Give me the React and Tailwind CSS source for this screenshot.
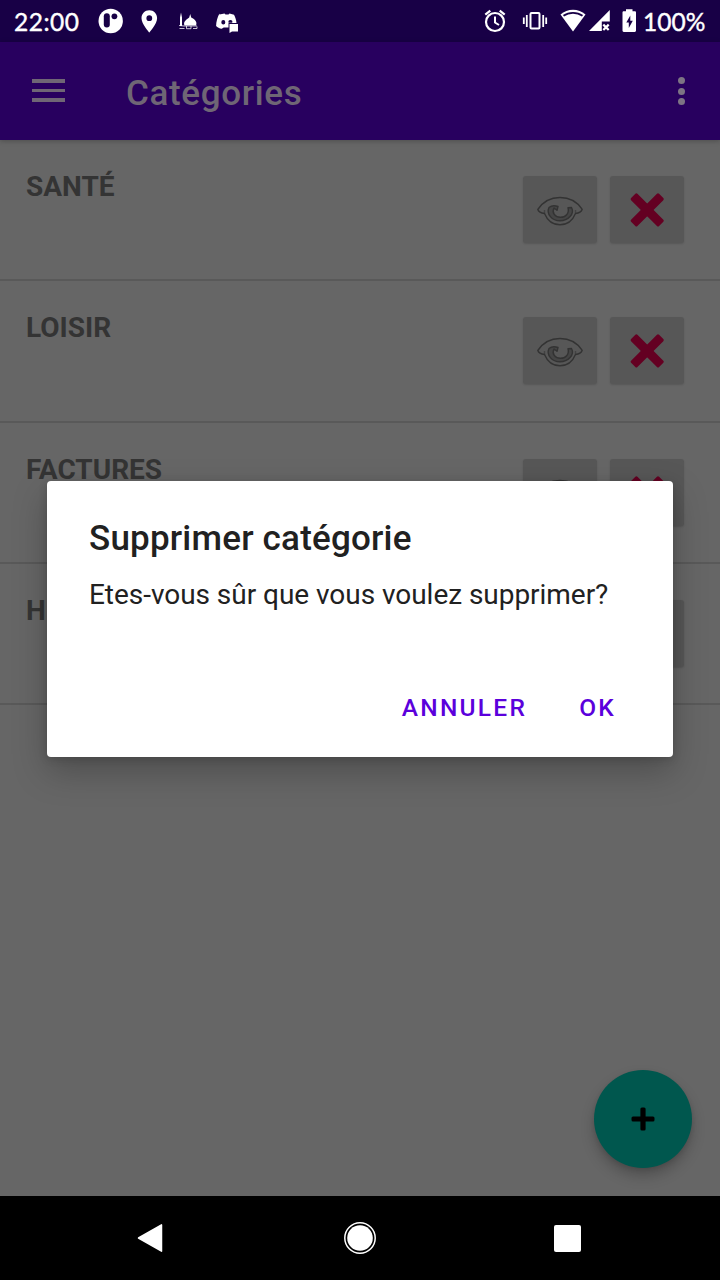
import React from "react";

const categories = ["SANTÉ", "LOISIR", "FACTURES", "H"];

function StatusBar() {
  return (
    <div className="flex h-[42px] shrink-0 items-center bg-[#180046] text-white">
      <span className="ml-[14px] w-[65px] pt-[2px] whitespace-nowrap font-[Lato,sans-serif] text-[24.500px] leading-[42px] tracking-[0.500px] [-webkit-text-stroke:0.4px_white]">22:00</span>
      <svg className="ml-[16px] h-[42px] w-[150px]" viewBox="95 0 150 42" fill="#fff">
        <circle cx="110.700" cy="21" r="12.200" />
        <rect x="103.800" y="13.200" width="6" height="14.400" rx="3" fill="#180046" />
        <circle cx="114.400" cy="16.300" r="2.900" fill="#180046" />
        <path fillRule="evenodd" d="M149.300 10.300c-4.400 0-7.800 3.500-7.800 7.900 0 5.700 7.800 14.300 7.800 14.300s7.800-8.600 7.800-14.300c0-4.400-3.400-7.900-7.800-7.900zm0 5a2.900 2.900 0 110 5.800 2.900 2.900 0 010-5.800z" />
        <path d="M180 26V17.500L181 12.500l1 5V26zM184.500 25.500c-1.500-3.500 1.200-5.500 4.700-8l1-3.500 1 3.500c4 2 6.300 4.500 4.800 8z" />
        <path d="M179 25.500l5 .5h13M179.500 28.500h5M186.500 26v2.700h4.500v-2.700M193 28.500h4v-2" stroke="#fff" strokeOpacity=".75" strokeWidth="1" fill="none" />
        <path fillRule="evenodd" d="M219.500 14.500l5-1 1 1h3l1-1 4.500 1.300c1.200 2 2.200 5 2.500 8.200h-8v4.500h-4.800l-2 1.200c-2.300-.2-4.300-1.300-5.600-2.700 0-4.500 1.400-9 3.400-12.500zm3.800 5.600a2 2.200 0 100 4.400 2 2.200 0 000-4.400zm7.100 0a2 2 0 00-1.800 2.600h3.600a2 2 0 00-1.800-2.600z" />
        <path d="M229.500 24h8.500v7.500h-6l-2.500 1.500z" />
      </svg>
      <svg className="ml-auto h-[42px] w-[164px]" viewBox="478 0 164 42" fill="none" stroke="#fff">
        <circle cx="495" cy="22" r="9" strokeWidth="2.200" />
        <path d="M495 16.500v6l4 2.500" strokeWidth="2" />
        <path d="M485.300 14.700l5-4M504.700 14.700l-5-4" strokeWidth="2.200" />
        <rect x="530.500" y="13" width="9" height="15.500" rx="1" strokeWidth="2" />
        <path d="M526.800 15v12M543.200 15v12M523.800 17.500v6.500M546.200 17.500v6.500" strokeWidth="1.800" />
        <path d="M560.500 14.500c7-6.300 18-6.300 25 0L573 31.500z" fill="#fff" stroke="none" />
        <path d="M563.500 15.800c5.500-4 13.500-4 19 0" stroke="#180046" strokeWidth="1.800" />
        <path d="M609.800 10v11.500h-8v9.500h-12.800z" fill="#fff" stroke="none" />
        <path d="M603.300 24.600l5.400 5.400M608.700 24.600l-5.400 5.400" strokeWidth="2.200" />
        <path d="M626 11.300v-2h6.500v2h2.200c.8 0 1.300.5 1.300 1.300v18c0 .8-.5 1.300-1.300 1.300h-10.900c-.8 0-1.300-.5-1.300-1.300v-18c0-.8.5-1.300 1.300-1.300z" fill="#fff" stroke="none" />
        <path d="M630.300 15.500l-4 7h2.500v5.500l4-7.200h-2.500z" fill="#180046" stroke="none" />
      </svg>
      <span className="mr-[14px] w-[64px] pt-[2px] pl-px whitespace-nowrap font-[Lato,sans-serif] text-[24.500px] leading-[42px] [-webkit-text-stroke:0.4px_white]">100%</span>
    </div>
  );
}

function AppBar() {
  return (
    <header className="relative z-10 flex h-[98px] shrink-0 items-center bg-[#28005f] shadow-[0_1px_5px_rgba(0,0,0,0.25)]">
      <div className="mb-px ml-8 flex w-[33px] flex-col gap-[6px]">
        <div className="h-[4px] bg-[#6f6675]" />
        <div className="h-[3px] bg-[#6f6675]" />
        <div className="h-[4px] bg-[#6f6675]" />
      </div>
      <h1 className="ml-[61px] pt-[5px] text-[35px] leading-[40px] font-medium tracking-[0.650px] text-[#6f6675]">Catégories</h1>
      <div className="mr-[35px] ml-auto flex flex-col gap-[3.500px]">
        <div className="size-[7px] rounded-full bg-[#7d7484]" />
        <div className="size-[7px] rounded-full bg-[#7d7484]" />
        <div className="size-[7px] rounded-full bg-[#7d7484]" />
      </div>
    </header>
  );
}

function Eye() {
  return (
    <svg className="h-[67px] w-[74px]" viewBox="0 0 74 67" fill="none" stroke="#333" strokeWidth="1.400" strokeLinejoin="round">
      <path d="M14.800 33.500C20 25.500 28 21.500 37 21.500S54 25.500 59.200 33.300C58.500 35.500 56.500 37.200 52.500 37.500C49.500 44.800 43.500 48.800 37 48.800S24.500 44.800 21.500 37.500C17.500 37 15.500 35.500 14.800 33.500z" />
      <path d="M21.500 37.500V34M52.500 37.500V34" strokeOpacity=".6" />
      <path d="M26 31.500C23 38 29 44.800 37 44.800S52 38 48.500 31.500L45 31.700C46.500 37.500 42.500 41.300 37.500 41.300C32 41.300 28.500 36.500 31 32L34 34.300L35 30.500C32 29.500 28.500 29.500 26 31.500z" fill="#454545" />
    </svg>
  );
}

function Cross() {
  return (
    <svg className="h-[67px] w-[74px]" viewBox="0 0 74 67" fill="#640022">
      <rect x="17.400" y="29.400" width="39.600" height="9" rx="1.500" transform="rotate(45 37.200 33.900)" />
      <rect x="17.400" y="29.400" width="39.600" height="9" rx="1.500" transform="rotate(-45 37.200 33.900)" />
    </svg>
  );
}

function Row({ name }) {
  return (
    <li className="flex h-[141.330px] items-start border-b-2 border-[#595959] pr-9 pl-[26px]">
      <span className="mt-[30px] text-[28px] leading-[33px] font-bold text-[#343434]">{name}</span>
      <div className="mt-[36px] ml-auto flex gap-[13px]">
        <button className="h-[67px] w-[74px] rounded-[3px] bg-[#575757] shadow-[0_1px_2px_rgba(0,0,0,0.15)]"><Eye /></button>
        <button className="h-[67px] w-[74px] rounded-[3px] bg-[#575757] shadow-[0_1px_2px_rgba(0,0,0,0.15)]"><Cross /></button>
      </div>
    </li>
  );
}

function Dialog() {
  return (
    <div role="dialog" className="absolute top-[481px] left-[47px] z-20 flex h-[276px] w-[626px] flex-col rounded-[4px] bg-white px-[42px] shadow-[0_14px_34px_rgba(0,0,0,0.25),0_2px_8px_rgba(0,0,0,0.15)]">
      <h2 className="mt-[37px] text-[35px] leading-[42px] font-medium tracking-[0.200px] whitespace-nowrap text-[#212121]">Supprimer catégorie</h2>
      <p className="mt-[18px] text-[28px] leading-[34px] tracking-[-0.040px] whitespace-nowrap text-[#212121]">Etes-vous sûr que vous voulez supprimer?</p>
      <div className="mt-[81px] flex justify-end gap-[52px] pr-[15px] text-[24.500px] leading-[30px] font-medium tracking-[2.250px] text-[#5b00dc]">
        <button>ANNULER</button>
        <button>OK</button>
      </div>
    </div>
  );
}

function NavBar() {
  return (
    <nav className="flex h-[84px] shrink-0 items-center justify-between bg-black pr-[139px] pl-[137px]">
      <svg className="h-8 w-[26px]" viewBox="0 0 26 32"><path d="M1.500 16L24.500 2.800V29.200z" fill="#fff" stroke="#fff" strokeWidth="1.500" strokeLinejoin="round" /></svg>
      <svg className="ml-[3px] size-8" viewBox="0 0 32 32"><circle cx="16" cy="16" r="15.200" fill="none" stroke="#fff" strokeWidth="1.500" /><circle cx="16" cy="16" r="12.800" fill="#fff" /></svg>
      <div className="size-[27px] rounded-[2px] bg-white" />
    </nav>
  );
}

export default function App() {
  return (
    <div className="relative flex h-[1280px] w-[720px] flex-col overflow-hidden bg-[#666] font-[Roboto,sans-serif]">
      <StatusBar />
      <AppBar />
      <main className="min-h-0 flex-1">
        <ul>
          {categories.map((name) => <Row key={name} name={name} />)}
        </ul>
      </main>
      <button className="absolute top-[1070px] left-[594px] flex size-[98px] items-center justify-center rounded-full bg-[#00574e] shadow-[0_8px_14px_rgba(0,0,0,0.22),0_2px_4px_rgba(0,0,0,0.1)]">
        <svg className="size-6" viewBox="0 0 24 24"><rect x="9.400" y="0.500" width="5.200" height="23" rx="1.500" /><rect x="0.500" y="9.400" width="23" height="5.200" rx="1.500" /></svg>
      </button>
      <NavBar />
      <Dialog />
    </div>
  );
}
